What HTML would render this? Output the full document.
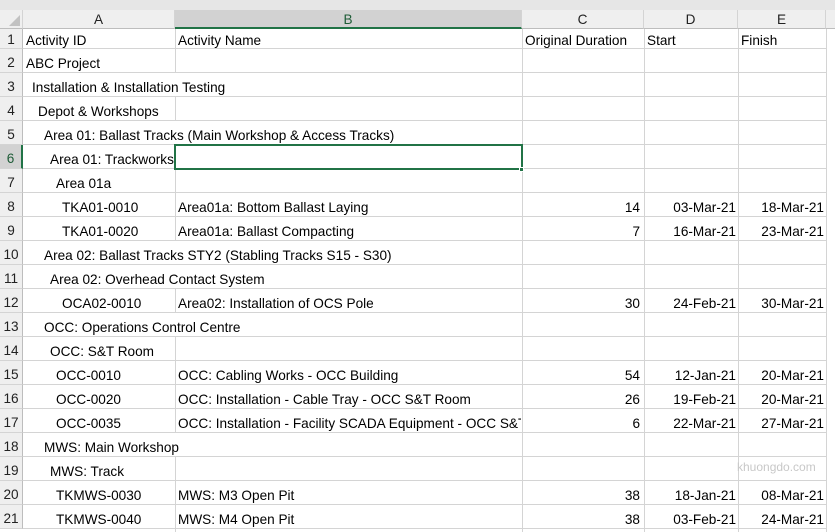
<!DOCTYPE html>
<html><head><meta charset="utf-8"><style>
*{margin:0;padding:0;box-sizing:border-box}
body{width:835px;height:532px;overflow:hidden;background:#fff;position:relative;font-family:"Liberation Sans",sans-serif;font-size:13.6px;color:#000}
.top{position:absolute;left:0;top:0;width:835px;height:10px;background:#e6e6e6}
.hdr{position:absolute;top:10px;height:19px;background:#efefef;border-right:1px solid #d4d4d4;border-bottom:1px solid #bdbdbd;text-align:center;line-height:19px;color:#222;font-size:13.6px}
.rn{position:absolute;left:0;width:23px;background:#efefef;border-right:1px solid #bdbdbd;border-bottom:1px solid #d4d4d4;text-align:center;color:#222}
.vl{position:absolute;top:29px;width:1px;height:503px;background:#d4d4d4}
.hl{position:absolute;left:23px;width:803px;height:1px;background:#d4d4d4}
.t{position:absolute;white-space:nowrap;line-height:24px}
.r{text-align:right}
.patch{position:absolute;width:1px;height:23px;background:#fff}
</style></head><body>
<div class="top"></div>
<div class="hdr" style="left:0;width:23px;background:#efefef"></div>
<svg style="position:absolute;left:8px;top:14px" width="13" height="13"><polygon points="12,1 12,12 1,12" fill="#c2c2c2"/></svg>
<div class="hdr" style="left:23px;width:152px">A</div>
<div class="hdr" style="left:175px;width:347px;background:#d2d2d2;border-bottom:2px solid #217346;color:#1e5c37">B</div>
<div class="hdr" style="left:522px;width:122px">C</div>
<div class="hdr" style="left:644px;width:94px">D</div>
<div class="hdr" style="left:738px;width:88px">E</div>
<div class="hdr" style="left:826px;width:9px;border-right:none"></div>
<div style="position:absolute;left:826px;top:29px;width:9px;height:503px;background:#fff"></div>

<div id="rows"></div>
<script>
(function(){
var data=[
["Activity ID",0,"Activity Name","Original Duration","Start","Finish",1],
["ABC Project",0],
["Installation & Installation Testing",1,null,null,null,null,0,1],
["Depot & Workshops",2],
["Area 01: Ballast Tracks (Main Workshop & Access Tracks)",3,null,null,null,null,0,2],
["Area 01: Trackworks",4],
["Area 01a",5],
["TKA01-0010",6,"Area01a: Bottom Ballast Laying","14","03-Mar-21","18-Mar-21"],
["TKA01-0020",6,"Area01a: Ballast Compacting","7","16-Mar-21","23-Mar-21"],
["Area 02: Ballast Tracks STY2 (Stabling Tracks S15 - S30)",3,null,null,null,null,0,2],
["Area 02: Overhead Contact System",4,null,null,null,null,0,1],
["OCA02-0010",6,"Area02: Installation of OCS Pole","30","24-Feb-21","30-Mar-21"],
["OCC: Operations Control Centre",3,null,null,null,null,0,1],
["OCC: S&T Room",4],
["OCC-0010",5,"OCC: Cabling Works - OCC Building","54","12-Jan-21","20-Mar-21"],
["OCC-0020",5,"OCC: Installation - Cable Tray - OCC S&T Room","26","19-Feb-21","20-Mar-21"],
["OCC-0035",5,"OCC: Installation - Facility SCADA Equipment - OCC S&T Room","6","22-Mar-21","27-Mar-21"],
["MWS: Main Workshop",3,null,null,null,null,0,1],
["MWS: Track",4],
["TKMWS-0030",5,"MWS: M3 Open Pit","38","18-Jan-21","08-Mar-21"],
["TKMWS-0040",5,"MWS: M4 Open Pit","38","03-Feb-21","24-Mar-21"]];
var h='';
[175,522,644,738,826].forEach(function(x){h+='<div class="vl" style="left:'+x+'px"></div>'});
for(var i=0;i<data.length;i++){
 var d=data[i];var yy=i==0?29:49+(i-1)*24;var ht=i==0?20:24;
 var off=(i==0?2:3);
 var bg=i==5?'background:#d2d2d2;border-right:2px solid #217346;color:#1e5c37;':'';
 h+='<div class="rn" style="top:'+yy+'px;height:'+ht+'px;line-height:'+(ht-off)+'px;padding-top:'+off+'px;'+bg+'">'+(i+1)+'</div>';
 h+='<div class="hl" style="top:'+(yy+ht-1)+'px"></div>';
 var ty=yy+off;
 var lh='line-height:'+ht+'px;';
 if(d[7]){h+='<div class="patch" style="left:175px;top:'+yy+'px"></div>';}
 h+='<div class="t" style="top:'+ty+'px;'+lh+'left:'+(26+d[1]*6)+'px">'+d[0].replace(/&/g,'&amp;')+'</div>';
 if(d[2]) h+='<div class="t" style="top:'+ty+'px;'+lh+'left:178px;width:343px;overflow:hidden">'+d[2].replace(/&/g,'&amp;')+'</div>';
 if(d[3]){ if(d[6]){h+='<div class="t" style="top:'+ty+'px;'+lh+'left:525px">'+d[3]+'</div><div class="t" style="top:'+ty+'px;'+lh+'left:647px">'+d[4]+'</div><div class="t" style="top:'+ty+'px;'+lh+'left:741px">'+d[5]+'</div>';}
 else{h+='<div class="t r" style="top:'+ty+'px;'+lh+'left:522px;width:118px">'+d[3]+'</div><div class="t r" style="top:'+ty+'px;'+lh+'left:644px;width:92px">'+d[4]+'</div><div class="t r" style="top:'+ty+'px;'+lh+'left:738px;width:86px">'+d[5]+'</div>';}}
}
h+='<div style="position:absolute;left:174px;top:144px;width:349px;height:26px;border:2px solid #217346"></div>';
h+='<div style="position:absolute;left:519px;top:167px;width:5px;height:5px;background:#217346;border:1px solid #fff"></div>';
h+='<div class="t" style="top:455px;left:737px;color:#c8c8c8;font-size:12px">khuongdo.com</div>';
document.getElementById('rows').innerHTML=h;
})();
</script>
</body></html>
